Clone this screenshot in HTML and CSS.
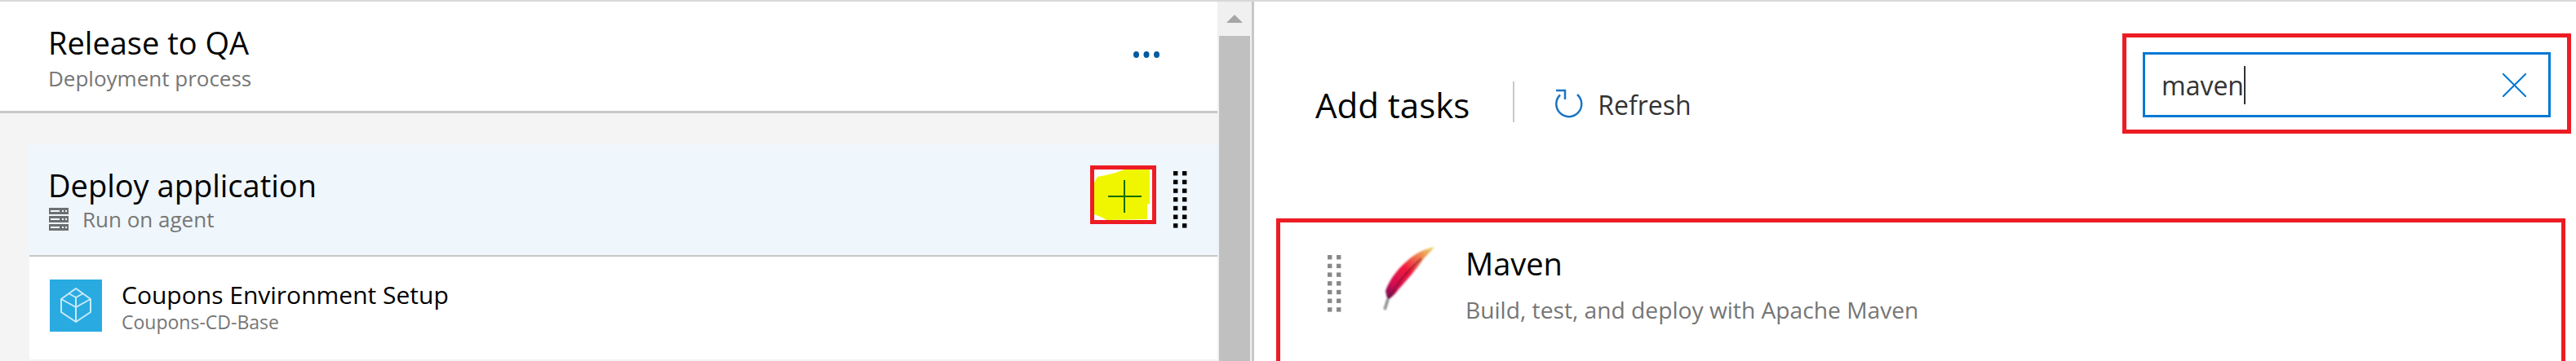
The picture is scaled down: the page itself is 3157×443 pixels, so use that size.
FILE: index.html
```html
<!DOCTYPE html>
<html lang="en">
<head>
    <meta charset="UTF-8">
    <title>Release to QA - Deployment process</title>
    <link rel="stylesheet" href="styles.css">
</head>
<body>
    <svg class="defs" width="0" height="0">
        <symbol id="grip" viewBox="0 0 17 70">
            <rect x="0" y="0" width="5.4" height="5.4"/><rect x="11" y="0" width="5.4" height="5.4"/>
            <rect x="0" y="10.7" width="5.4" height="5.4"/><rect x="11" y="10.7" width="5.4" height="5.4"/>
            <rect x="0" y="21.4" width="5.4" height="5.4"/><rect x="11" y="21.4" width="5.4" height="5.4"/>
            <rect x="0" y="32.1" width="5.4" height="5.4"/><rect x="11" y="32.1" width="5.4" height="5.4"/>
            <rect x="0" y="42.8" width="5.4" height="5.4"/><rect x="11" y="42.8" width="5.4" height="5.4"/>
            <rect x="0" y="53.5" width="5.4" height="5.4"/><rect x="11" y="53.5" width="5.4" height="5.4"/>
            <rect x="0" y="64.2" width="5.4" height="5.4"/><rect x="11" y="64.2" width="5.4" height="5.4"/>
        </symbol>
    </svg>

    <div class="page">
        <div class="left">
            <header class="process">
                <div class="process-head">
                    <h1 class="process-title">Release to QA</h1>
                    <div class="process-sub">Deployment process</div>
                </div>
                <svg class="more" width="33" height="10" viewBox="0 0 33 10">
                    <ellipse cx="3.5" cy="5" rx="3.5" ry="4"/>
                    <ellipse cx="16" cy="5" rx="3.5" ry="4"/>
                    <ellipse cx="28.5" cy="5" rx="3.5" ry="4"/>
                </svg>
            </header>
            <div class="canvas">
                <div class="phase">
                    <div class="phase-info">
                        <h2 class="phase-title">Deploy application</h2>
                        <div class="phase-sub">
                            <svg class="server" width="24" height="28" viewBox="0 0 24 28">
                                <rect y="0" width="24" height="8"/>
                                <rect y="10" width="24" height="8"/>
                                <rect y="20" width="24" height="8"/>
                                <path class="server-holes" d="M2 4h11M16 4h2M20 4h2M2 14h11M16 14h2M20 14h2M2 24h11M16 24h2M20 24h2"/>
                            </svg>
                            <span>Run on agent</span>
                        </div>
                    </div>
                    <button class="add-btn">
                        <svg width="71" height="62" viewBox="0 0 71 62">
                            <polygon class="marker" points="0,16 4,9 14,7 26,4 37,0 68,0 68,42 65,43 65,61 15,62 10,59 0,55"/>
                            <path class="plus" d="M17 33h41M37 13v40"/>
                        </svg>
                    </button>
                    <svg class="grip grip-dark" width="17" height="70"><use href="#grip"/></svg>
                </div>
                <div class="task">
                    <div class="task-icon">
                        <svg width="64" height="64" viewBox="0 0 64 64">
                            <path d="M32 11L50 24V40L32 52L14 40V24ZM14 24L32 34L50 24M32 34V52M23 17L32 22L41 17M32 22V34"/>
                        </svg>
                    </div>
                    <div>
                        <div class="task-name">Coupons Environment Setup</div>
                        <div class="task-sub">Coupons-CD-Base</div>
                    </div>
                </div>
            </div>
        </div>
        <div class="scrollbar">
            <div class="scroll-up"><span class="arrow"></span></div>
            <div class="scroll-thumb"></div>
        </div>
        <div class="right">
            <div class="toolbar">
                <div class="toolbar-left">
                    <div class="add-tasks">Add tasks</div>
                    <div class="divider"></div>
                    <svg class="refresh-icon" width="40" height="40" viewBox="0 0 40 40">
                        <path d="M30 8A15.5 15.5 0 1 1 9 8.500M4 3H15V14"/>
                    </svg>
                    <div class="refresh">Refresh</div>
                </div>
                <div class="search-mark">
                    <div class="search">
                        <div class="search-text">maven<span class="caret"></span></div>
                        <svg class="clear" width="29" height="29" viewBox="0 0 29 29">
                            <path d="M0 0L29 29M29 0L0 29"/>
                        </svg>
                    </div>
                </div>
            </div>
            <div class="results-mark">
                <div class="result">
                    <svg class="grip grip-grey" width="17" height="70"><use href="#grip"/></svg>
                    <svg class="feather" width="72" height="84" viewBox="0 0 72 84">
                        <defs>
                            <linearGradient id="plume" x1="68" y1="3" x2="8" y2="68" gradientUnits="userSpaceOnUse">
                                <stop offset="0" stop-color="#e6e070"/>
                                <stop offset="0.22" stop-color="#ef8a50"/>
                                <stop offset="0.5" stop-color="#f2143c"/>
                                <stop offset="0.78" stop-color="#d01050"/>
                                <stop offset="1" stop-color="#5a1050"/>
                            </linearGradient>
                            <filter id="soft"><feGaussianBlur stdDeviation="1"/></filter>
                        </defs>
                        <g filter="url(#soft)">
                            <path fill="url(#plume)" d="M68 3C58 5 48 9 38 17C26 27 14 40 8 57C9 62 10 66 11 68C16 64 21 60 24 55C34 44 46 30 55 17C60 12 65 7 68 3Z"/>
                            <path fill="none" stroke="#6a1030" stroke-width="1.5" d="M52 17C36 32 22 46 13 66"/>
                            <path fill="none" stroke="#8a8f90" stroke-width="3.500" d="M11 67L7 80"/>
                        </g>
                    </svg>
                    <div>
                        <div class="result-name">Maven</div>
                        <div class="result-sub">Build, test, and deploy with Apache Maven</div>
                    </div>
                </div>
            </div>
        </div>
    </div>
</body>
</html>
```

FILE: styles.css
```css
body {
    margin: 0;
    font-family: "Open Sans", "Noto Sans", sans-serif;
    background-color: white;
    overflow: hidden;
}
.defs {
    position: absolute;
}
.page {
    display: flex;
    height: 441px;
    border-top: 2px solid #d8d8d8;
    overflow: hidden;
}
.left {
    width: 1492px;
    flex-shrink: 0;
}
.process {
    display: flex;
    justify-content: space-between;
    align-items: center;
    height: 134px;
    padding: 0 70px 0 59px;
    border-bottom: 3px solid #c8c8c8;
    box-sizing: content-box;
}
.process-head {
    margin-top: 4px;
}
.process-title {
    margin: 0;
    font-size: 38px;
    font-weight: 400;
    line-height: 50px;
    color: #000;
}
.process-sub {
    font-size: 26px;
    line-height: 38px;
    color: #767676;
}
.more {
    fill: #005a9e;
    margin-bottom: 4px;
}
.canvas {
    height: 304px;
    padding: 38px 0 0 36px;
    box-sizing: border-box;
    background-color: #f4f4f4;
}
.phase {
    display: flex;
    align-items: center;
    height: 138px;
    padding: 0 37px 0 23px;
    box-sizing: border-box;
    background-color: #eff6fc;
    border-bottom: 2px solid #c8c8c8;
}
.phase-info {
    flex: 1;
}
.phase-title {
    margin: 0;
    font-size: 38px;
    font-weight: 400;
    line-height: 48px;
    color: #000;
}
.phase-sub {
    display: flex;
    align-items: center;
    gap: 17px;
    margin-left: 1px;
    font-size: 26px;
    line-height: 36px;
    color: #767676;
}
.server {
    fill: #6d7072;
}
.server-holes {
    fill: none;
    stroke: #eff6fc;
    stroke-width: 2;
}
.add-btn {
    display: block;
    padding: 0;
    margin: 0 21px 12px 0;
    border: 5px solid #ed1c24;
    background-color: white;
    line-height: 0;
}
.marker {
    fill: #f0f500;
}
.plus {
    fill: none;
    stroke: #0b6e00;
    stroke-width: 2;
}
.grip-dark {
    fill: #000;
}
.grip-grey {
    fill: #888;
}
.task {
    display: flex;
    gap: 24px;
    height: 126px;
    padding: 28px 0 0 25px;
    box-sizing: border-box;
    background-color: white;
}
.task-icon {
    width: 64px;
    height: 64px;
    background-color: #29abe2;
}
.task-icon svg {
    fill: none;
    stroke: rgba(255, 255, 255, 0.75);
    stroke-width: 2;
    stroke-linejoin: round;
}
.task-name {
    font-size: 30px;
    line-height: 38px;
    color: #000;
}
.task-sub {
    font-size: 23px;
    line-height: 28px;
    color: #767676;
}
.scrollbar {
    width: 42px;
    flex-shrink: 0;
    background-color: #f0f0f0;
}
.scroll-up {
    display: flex;
    justify-content: center;
    align-items: center;
    height: 42px;
}
.arrow {
    width: 0;
    height: 0;
    border-left: 10px solid transparent;
    border-right: 10px solid transparent;
    border-bottom: 10px solid #a6a6a6;
}
.scroll-thumb {
    height: 399px;
    margin: 0 2px;
    background-color: #c0c0c0;
}
.right {
    flex: 1;
    border-left: 3px solid #c8c8c8;
}
.toolbar {
    display: flex;
    justify-content: space-between;
    padding: 39px 6px 0 75px;
}
.toolbar-left {
    display: flex;
    align-items: center;
    height: 50px;
    margin-top: 59px;
}
.add-tasks {
    margin-top: 6px;
    font-size: 42px;
    color: #000;
}
.divider {
    width: 2px;
    height: 50px;
    margin: 0 47px 0 53px;
    background-color: #c8c8c8;
}
.refresh-icon {
    margin-top: 6px;
    fill: none;
    stroke: #1a75c4;
    stroke-width: 2.500;
}
.refresh {
    margin: 6px 0 0 15px;
    font-size: 32px;
    color: #333;
}
.search-mark {
    width: 550px;
    height: 123px;
    padding: 18px 20px;
    box-sizing: border-box;
    border: 5px solid #ed1c24;
}
.search {
    display: flex;
    justify-content: space-between;
    align-items: center;
    height: 80px;
    padding: 0 27px 0 20px;
    box-sizing: border-box;
    border: 3px solid #0078d4;
}
.search-text {
    display: flex;
    align-items: center;
    font-size: 32px;
    color: #333;
}
.caret {
    width: 2px;
    height: 47px;
    background-color: #333;
}
.clear {
    fill: none;
    stroke: #0078d4;
    stroke-width: 2;
}
.results-mark {
    height: 240px;
    margin: 104px 13px 0 27px;
    box-sizing: border-box;
    border: 5px solid #ed1c24;
    border-bottom: none;
}
.result {
    display: flex;
    align-items: flex-start;
    padding: 27px 0 0 58px;
}
.result .grip {
    margin: 13px 46px 0 0;
}
.result-name {
    margin-left: 34px;
    font-size: 38px;
    line-height: 46px;
    color: #000;
}
.result-sub {
    margin: 15px 0 0 34px;
    font-size: 28.2px;
    line-height: 38px;
    color: #767676;
}
```
